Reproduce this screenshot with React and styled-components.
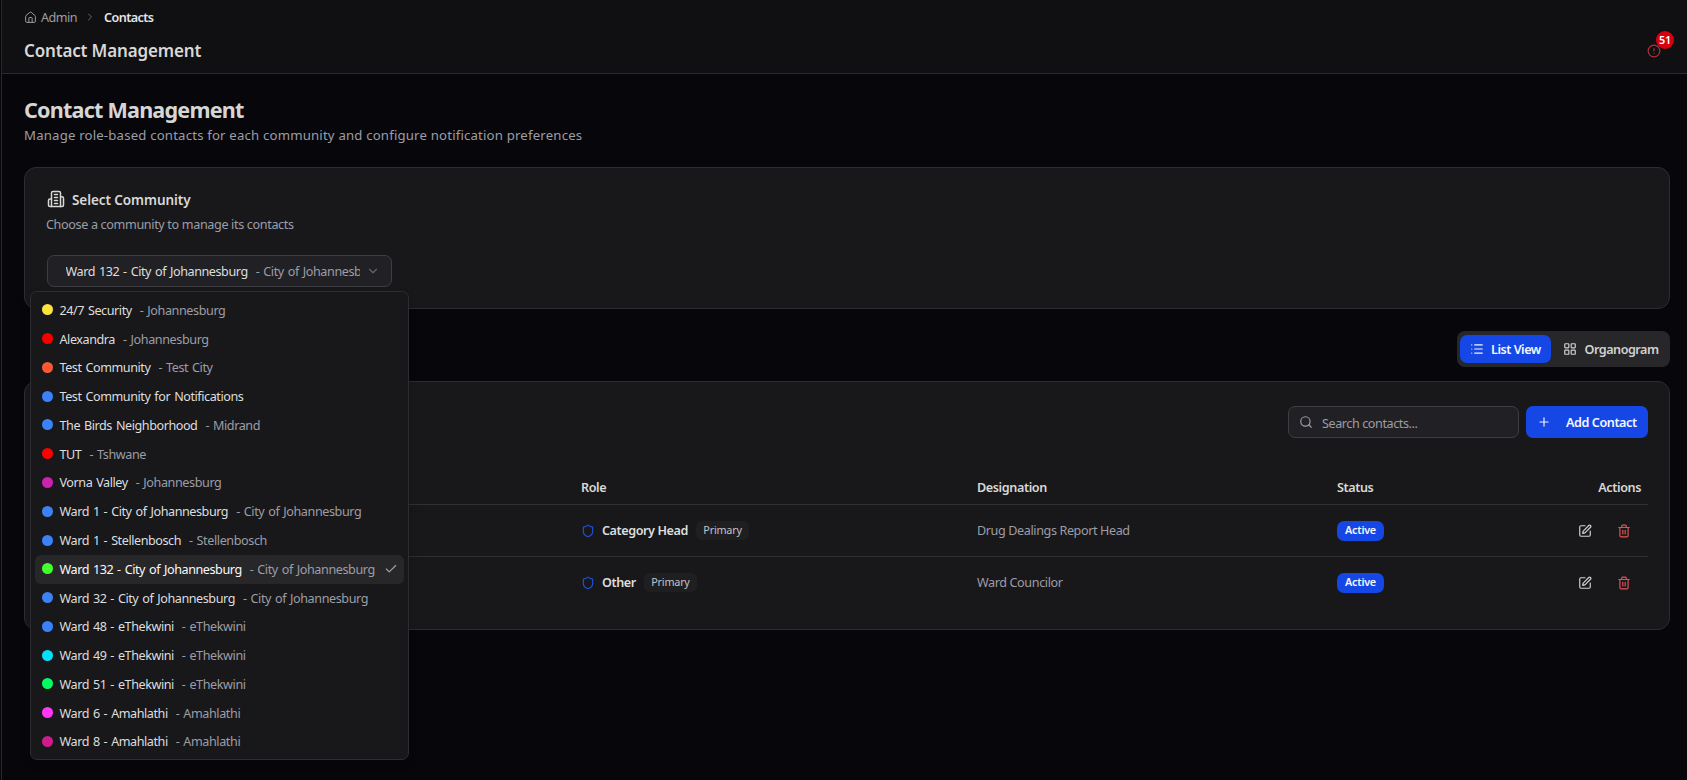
import React, { useState } from 'react';
import styled, { createGlobalStyle } from 'styled-components';
import {
  Check, ChevronDown, ChevronRight, CircleAlert, House,
  LayoutGrid, List, Plus, Search, Shield, SquarePen, Trash2,
} from 'lucide-react';

const GlobalStyle = createGlobalStyle`
  * { box-sizing: border-box; }
  html, body { margin: 0; padding: 0; background: #07070b; }
  body {
    font-family: "Noto Sans", "Open Sans", sans-serif;
    font-size: 12.6px;
    color: #dededf;
    overflow: hidden;
  }
  button, input { font-family: inherit; }
`;

// ─── Layout ──────────────────────────────────────────────────────────────────

const Page = styled.div`
  height: 780px;
  border-left: 1px solid #29292d;
  margin-left: 1px;
  overflow: hidden;
`;

const Header = styled.header`
  height: 74px;
  background: #101013;
  border-bottom: 1px solid #2b2b2f;
  padding: 7px 20px 0 22px;
`;

const Breadcrumb = styled.nav`
  display: flex;
  align-items: center;
  height: 20px;
  color: #9d9da6;
`;

const Crumb = styled.span`
  margin-left: 4px;
  letter-spacing: -0.5px;
`;

const CrumbCurrent = styled.span`
  margin-left: 8px;
  color: #e4e4e5;
  font-weight: 600;
  letter-spacing: -0.6px;
`;

const CrumbArrow = styled(ChevronRight)`
  margin-left: 7px;
  color: #66666c;
`;

const HeaderRow = styled.div`
  display: flex;
  justify-content: space-between;
  align-items: center;
  height: 28px;
  margin-top: 9px;
`;

const HeaderTitle = styled.div`
  font-size: 17px;
  font-weight: 600;
  color: #d8d8d6;
  letter-spacing: -0.16px;
`;

const Alerts = styled.div`
  position: relative;
  width: 20px;
  height: 14px;
  margin-top: 2px;
  color: #b5303a;
  svg { display: block; }
`;

const AlertCount = styled.span`
  position: absolute;
  left: 9px;
  top: -13px;
  width: 18px;
  height: 18px;
  border-radius: 50%;
  background: #d8000f;
  color: #fff;
  font-size: 10.8px;
  font-weight: 600;
  line-height: 18px;
  text-align: center;
  letter-spacing: -0.3px;
`;

const Main = styled.main`
  padding: 22px 17px 0 22px;
`;

const Title = styled.h1`
  margin: 0;
  font-size: 21.6px;
  line-height: 28px;
  font-weight: 700;
  color: #d6d6d4;
  letter-spacing: -0.8px;
`;

const Subtitle = styled.p`
  margin: 0;
  line-height: 22px;
  font-size: 13.2px;
  color: #9d9da6;
  letter-spacing: 0.18px;
`;

const Card = styled.section`
  background: #18181b;
  border: 1px solid #2d2d31;
  border-radius: 12px;
  padding: 0 21px 0 22px;
`;

const CommunityCard = styled(Card)`
  height: 142px;
  margin-top: 21px;
  padding-top: 22px;
`;

const ContactsCard = styled(Card)`
  height: 249px;
  margin-top: 14px;
  padding-top: 24px;
`;

// ─── Seletor ─────────────────────────────────────────────────────────────────

const CardTitle = styled.div`
  display: flex;
  align-items: center;
  gap: 7px;
  height: 20px;
  font-size: 13.5px;
  font-weight: 600;
  color: #d8d8d6;
  letter-spacing: -0.07px;
  svg { margin-top: -2px; }
`;

const CardText = styled.div`
  height: 20px;
  line-height: 20px;
  margin: 5px 0 0 -1px;
  color: #9d9da6;
  letter-spacing: -0.35px;
`;

const SelectWrap = styled.div`
  position: relative;
  width: 345px;
  margin-top: 20px;
`;

const SelectTrigger = styled.button`
  display: flex;
  align-items: center;
  width: 100%;
  height: 32px;
  padding: 0 11px 0 17.5px;
  border: 1px solid #3d3d42;
  border-radius: 7px;
  background: #212125;
  color: inherit;
  font-size: 12.6px;
  text-align: left;
`;

const SelectValue = styled.span`
  flex: 1;
  overflow: hidden;
  white-space: nowrap;
  letter-spacing: -0.43px;
`;

const SelectArrow = styled(ChevronDown)`
  margin-left: 6px;
  color: #66666c;
  flex-shrink: 0;
`;

const Menu = styled.div`
  position: absolute;
  z-index: 5;
  left: -17px;
  top: 36px;
  width: 379px;
  height: 469px;
  padding: 4px;
  background: #18181b;
  border: 1px solid #2d2d31;
  border-radius: 7px;
  box-shadow: 0 4px 8px rgba(0, 0, 0, 0.2);
`;

const Option = styled.div`
  display: flex;
  align-items: center;
  height: 28.78px;
  padding: 0 6px 0 7px;
  border-radius: 6px;
  white-space: nowrap;
  background: ${({ $selected }) => ($selected ? '#27272a' : 'transparent')};
  color: ${({ $selected }) => ($selected ? '#fafafa' : '#dededf')};
`;

const Dot = styled.i`
  width: 11px;
  height: 11px;
  margin: -1px 6.5px 0 0;
  border-radius: 50%;
  background: ${({ $color }) => $color};
`;

const Name = styled.span`
  letter-spacing: -0.44px;
  word-spacing: 1.1px;
`;

const City = styled.span`
  margin-left: 8px;
  color: #9d9da6;
  letter-spacing: -0.4px;
  word-spacing: 1px;
`;

const Tick = styled(Check)`
  margin-left: auto;
  color: #a2a2a5;
`;

// ─── Lista ───────────────────────────────────────────────────────────────────

const ViewRow = styled.div`
  display: flex;
  justify-content: flex-end;
  margin-top: 22px;
`;

const ViewToggle = styled.div`
  display: flex;
  width: 213px;
  height: 36px;
  padding: 4px 3px;
  border-radius: 8px;
  background: #27272a;
`;

const ViewButton = styled.button`
  display: flex;
  align-items: center;
  gap: 7.5px;
  width: ${({ $active }) => ($active ? '91px' : '116px')};
  height: 28px;
  padding: 0 0 0 ${({ $active }) => ($active ? '9.5px' : '12px')};
  border: none;
  border-radius: 7px;
  background: ${({ $active }) => ($active ? '#1447e6' : 'transparent')};
  color: ${({ $active }) => ($active ? '#f4f6ff' : '#d2d2d0')};
  font-size: 12.6px;
  font-weight: 600;
  letter-spacing: -0.48px;
  white-space: nowrap;
`;

const Toolbar = styled.div`
  display: flex;
  justify-content: flex-end;
  gap: 7px;
  height: 32px;
`;

const SearchBox = styled.label`
  display: flex;
  align-items: center;
  gap: 8px;
  width: 231px;
  padding-left: 10px;
  border: 1px solid #3d3d42;
  border-radius: 7px;
  background: #212125;
  color: #9d9da6;
`;

const SearchInput = styled.input`
  width: 180px;
  padding: 2px 0 0 1px;
  border: none;
  outline: none;
  background: none;
  color: #dededf;
  font-size: 12.6px;
  letter-spacing: -0.42px;
  &::placeholder { color: #9d9da6; opacity: 1; }
`;

const AddButton = styled.button`
  display: flex;
  align-items: center;
  gap: 15px;
  width: 122px;
  padding: 0 0 0 11px;
  border: none;
  border-radius: 7px;
  background: #1447e6;
  color: #f4f6ff;
  font-size: 12.6px;
  font-weight: 600;
  letter-spacing: -0.42px;
  white-space: nowrap;
`;

const Table = styled.div`
  margin-top: 31px;
`;

const Row = styled.div`
  display: grid;
  grid-template-columns: 527px 396px 360px 1fr;
  align-items: center;
  height: ${({ $head }) => ($head ? '36px' : '52px')};
  padding-top: ${({ $head }) => ($head ? '2px' : '0')};
  border-bottom: 1px solid ${({ $last }) => ($last ? 'transparent' : '#2f2f34')};
  color: ${({ $head }) => ($head ? '#d8d8d6' : '#9d9da6')};
  font-weight: ${({ $head }) => ($head ? 600 : 400)};
  letter-spacing: -0.39px;
`;

const Cell = styled.div`
  display: flex;
  align-items: center;
  justify-content: ${({ $between }) => ($between ? 'space-between' : 'flex-start')};
  padding: 0 7px;
`;

const RoleIcon = styled(Shield)`
  margin-right: 7px;
  color: #1f50d8;
`;

const RoleName = styled.span`
  color: #dededc;
  font-weight: 600;
  letter-spacing: -0.42px;
`;

const Primary = styled.span`
  height: 19px;
  margin: -1px 0 0 8px;
  padding: 0 7.5px;
  border-radius: 6px;
  background: #1f1f22;
  color: #c3c3c3;
  font-size: 10.8px;
  line-height: 18px;
  letter-spacing: -0.22px;
`;

const Status = styled.span`
  width: 47px;
  height: 20px;
  border-radius: 7px;
  background: #1447e6;
  color: #f4f6ff;
  font-size: 10.8px;
  font-weight: 600;
  line-height: 18px;
  text-align: center;
  letter-spacing: -0.25px;
`;

const Actions = styled.div`
  display: flex;
  gap: 25px;
  padding-right: 10px;
`;

const IconButton = styled.button`
  display: flex;
  padding: 0;
  border: none;
  background: none;
  color: ${({ $danger }) => ($danger ? '#e25255' : '#d2d2d0')};
`;

// ─── Dados ───────────────────────────────────────────────────────────────────

const COMMUNITIES = [
  { name: '24/7 Security', city: 'Johannesburg', color: '#ffe338' },
  { name: 'Alexandra', city: 'Johannesburg', color: '#f50000' },
  { name: 'Test Community', city: 'Test City', color: '#ff5733' },
  { name: 'Test Community for Notifications', color: '#3b82f6' },
  { name: 'The Birds Neighborhood', city: 'Midrand', color: '#3b82f6' },
  { name: 'TUT', city: 'Tshwane', color: '#ff0000' },
  { name: 'Vorna Valley', city: 'Johannesburg', color: '#cb22b0' },
  { name: 'Ward 1 - City of Johannesburg', city: 'City of Johannesburg', color: '#3b82f6' },
  { name: 'Ward 1 - Stellenbosch', city: 'Stellenbosch', color: '#3b82f6' },
  { name: 'Ward 132 - City of Johannesburg', city: 'City of Johannesburg', color: '#46ff2e' },
  { name: 'Ward 32 - City of Johannesburg', city: 'City of Johannesburg', color: '#3b82f6' },
  { name: 'Ward 48 - eThekwini', city: 'eThekwini', color: '#3b82f6' },
  { name: 'Ward 49 - eThekwini', city: 'eThekwini', color: '#00e1ff' },
  { name: 'Ward 51 - eThekwini', city: 'eThekwini', color: '#00ff5e' },
  { name: 'Ward 6 - Amahlathi', city: 'Amahlathi', color: '#ff38f5' },
  { name: 'Ward 8 - Amahlathi', city: 'Amahlathi', color: '#d11a8c' },
];

const CONTACTS = [
  { role: 'Category Head', designation: 'Drug Dealings Report Head' },
  { role: 'Other', designation: 'Ward Councilor' },
];

// ─── Componente ──────────────────────────────────────────────────────────────

function BuildingIcon() {
  return (
    <svg
      width="18" height="18" viewBox="0 0 24 24" fill="none" stroke="currentColor"
      strokeWidth="2" strokeLinecap="round" strokeLinejoin="round"
    >
      <path d="M6 22V4a2 2 0 0 1 2-2h8a2 2 0 0 1 2 2v18Z" />
      <path d="M6 12H4a2 2 0 0 0-2 2v6a2 2 0 0 0 2 2h2" />
      <path d="M18 9h2a2 2 0 0 1 2 2v9a2 2 0 0 1-2 2h-2" />
      <path d="M10 6h4M10 10h4M10 14h4M10 18h4" />
    </svg>
  );
}

export default function App() {
  const [selected, setSelected] = useState(COMMUNITIES[9]);
  const [view, setView] = useState('list');
  const [query, setQuery] = useState('');

  return (
    <>
      <GlobalStyle />
      <Page>
        <Header>
          <Breadcrumb>
            <House size={13} strokeWidth={1.8} />
            <Crumb>Admin</Crumb>
            <CrumbArrow size={12} />
            <CrumbCurrent>Contacts</CrumbCurrent>
          </Breadcrumb>
          <HeaderRow>
            <HeaderTitle>Contact Management</HeaderTitle>
            <Alerts>
              <CircleAlert size={14} />
              <AlertCount>51</AlertCount>
            </Alerts>
          </HeaderRow>
        </Header>

        <Main>
          <Title>Contact Management</Title>
          <Subtitle>Manage role-based contacts for each community and configure notification preferences</Subtitle>

          <CommunityCard>
            <CardTitle><BuildingIcon />Select Community</CardTitle>
            <CardText>Choose a community to manage its contacts</CardText>
            <SelectWrap>
              <SelectTrigger>
                <SelectValue>
                  <Name>{selected.name}</Name>
                  {selected.city && <City>- {selected.city}</City>}
                </SelectValue>
                <SelectArrow size={14} />
              </SelectTrigger>
              <Menu>
                {COMMUNITIES.map(c => (
                  <Option key={c.name} $selected={c === selected} onClick={() => setSelected(c)}>
                    <Dot $color={c.color} />
                    <Name>{c.name}</Name>
                    {c.city && <City>- {c.city}</City>}
                    {c === selected && <Tick size={14} />}
                  </Option>
                ))}
              </Menu>
            </SelectWrap>
          </CommunityCard>

          <ViewRow>
            <ViewToggle>
              <ViewButton $active={view === 'list'} onClick={() => setView('list')}>
                <List size={14} />List View
              </ViewButton>
              <ViewButton $active={view === 'org'} onClick={() => setView('org')}>
                <LayoutGrid size={14} />Organogram
              </ViewButton>
            </ViewToggle>
          </ViewRow>

          <ContactsCard>
            <Toolbar>
              <SearchBox>
                <Search size={14} />
                <SearchInput
                  value={query}
                  onChange={e => setQuery(e.target.value)}
                  placeholder="Search contacts..."
                />
              </SearchBox>
              <AddButton><Plus size={14} />Add Contact</AddButton>
            </Toolbar>

            <Table>
              <Row $head>
                <Cell />
                <Cell>Role</Cell>
                <Cell>Designation</Cell>
                <Cell $between><span>Status</span><span>Actions</span></Cell>
              </Row>
              {CONTACTS.map((c, i) => (
                <Row key={c.role} $last={i === CONTACTS.length - 1}>
                  <Cell />
                  <Cell>
                    <RoleIcon size={14} />
                    <RoleName>{c.role}</RoleName>
                    <Primary>Primary</Primary>
                  </Cell>
                  <Cell>{c.designation}</Cell>
                  <Cell $between>
                    <Status>Active</Status>
                    <Actions>
                      <IconButton title="Edit"><SquarePen size={14} /></IconButton>
                      <IconButton title="Delete" $danger><Trash2 size={14} /></IconButton>
                    </Actions>
                  </Cell>
                </Row>
              ))}
            </Table>
          </ContactsCard>
        </Main>
      </Page>
    </>
  );
}
